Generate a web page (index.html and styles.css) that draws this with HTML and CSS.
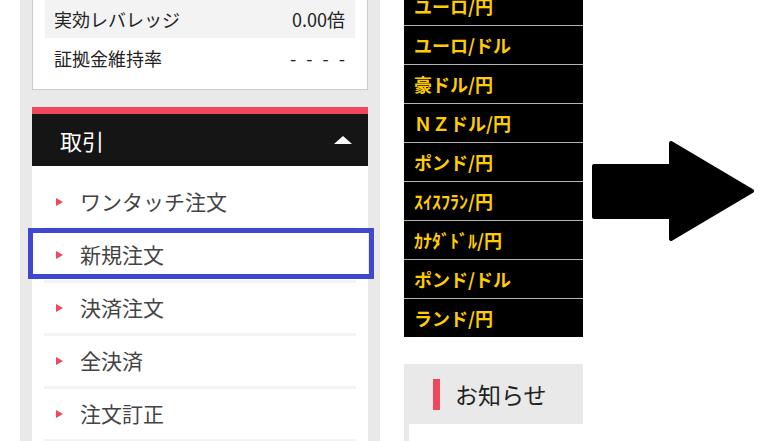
FILE: index.html
```html
<!DOCTYPE html>
<html lang="ja">
<head>
    <meta charset="UTF-8">
    <meta name="viewport" content="width=device-width, initial-scale=1.0">
    <title>取引メニュー</title>
    <link rel="stylesheet" href="styles.css">
</head>
<body>
    <div class="page">
        <div class="side">
            <div class="stats">
                <div class="stat shade"><span>実効レバレッジ</span><span>0.00倍</span></div>
                <div class="stat"><span>証拠金維持率</span><span class="dash">- - - -</span></div>
            </div>

            <div class="trade">
                <div class="trade-head">
                    <span>取引</span>
                    <span class="caret"></span>
                </div>
                <ul class="menu">
                    <li>ワンタッチ注文</li>
                    <li class="marked">新規注文<span class="mark"></span></li>
                    <li>決済注文</li>
                    <li>全決済</li>
                    <li>注文訂正</li>
                </ul>
            </div>
        </div>

        <div class="middle">
            <ul class="pairs">
                <li>ユーロ/円</li>
                <li>ユーロ/ドル</li>
                <li>豪ドル/円</li>
                <li>ＮＺドル/円</li>
                <li>ポンド/円</li>
                <li>ｽｲｽﾌﾗﾝ/円</li>
                <li>ｶﾅﾀﾞﾄﾞﾙ/円</li>
                <li>ポンド/ドル</li>
                <li>ランド/円</li>
            </ul>

            <div class="notice">
                <h2>お知らせ</h2>
                <div class="notice-body"></div>
            </div>
        </div>

        <svg class="arrow" width="162" height="100" viewBox="0 0 162 100">
            <polygon points="2,25 79,25 79,2 160,50 79,98 79,76 2,76" fill="#000" stroke="#000" stroke-width="4" stroke-linejoin="round"/>
        </svg>
    </div>
</body>
</html>
```

FILE: styles.css
```css
body {
    margin: 0;
    font-family: "Noto Sans CJK JP", "Noto Sans", sans-serif;
    color: #333;
    background-color: #fff;
    overflow: hidden;
}

.page {
    display: flex;
    align-items: flex-start;
    height: 441px;
}

.side {
    margin-left: 20px;
    width: 336px;
    padding: 0 12px;
    height: 441px;
    background-color: #e9e9e9;
}

.stats {
    margin-top: -13px;
    padding: 12px 12px 11px;
    background-color: #fff;
    border: 1px solid #ccc;
}

.stat {
    display: flex;
    justify-content: space-between;
    align-items: center;
    height: 38px;
    padding: 0 10px 0 9px;
    font-size: 18px;
    color: #222;
}

.stat + .stat {
    height: 40px;
}

.shade {
    background-color: #f3f3f3;
}

.dash {
    letter-spacing: 3px;
    margin-right: -3px;
}

.trade {
    margin-top: 17px;
    border-top: 7px solid #ef475c;
    background-color: #fff;
}

.trade-head {
    display: flex;
    justify-content: space-between;
    align-items: center;
    height: 52px;
    padding: 0 16px 0 28px;
    background-color: #151515;
    color: #fff;
    font-size: 22px;
}

.caret {
    width: 0;
    height: 0;
    border-left: 9px solid transparent;
    border-right: 9px solid transparent;
    border-bottom: 8px solid #fff;
}

.menu {
    list-style: none;
    margin: 0;
    padding: 11px 12px 0;
}

.menu li {
    position: relative;
    display: flex;
    align-items: center;
    height: 47px;
    padding: 0 0 3px 36px;
    border-bottom: 3px solid #f3f3f3;
    font-size: 21px;
    color: #444;
}

.menu li::before {
    content: "";
    position: absolute;
    left: 12px;
    top: 21px;
    border-top: 4px solid transparent;
    border-bottom: 4px solid transparent;
    border-left: 7px solid #ef475c;
}

.mark {
    position: absolute;
    left: -16px;
    right: -18px;
    top: -2px;
    bottom: 1px;
    border: 5px solid #3f48cc;
}

.middle {
    margin-left: 24px;
    width: 179px;
}

.pairs {
    list-style: none;
    margin: -13px 0 0;
    padding: 0;
    background-color: #000;
}

.pairs li {
    display: flex;
    align-items: center;
    height: 37px;
    padding: 0 0 1px 10px;
    border-bottom: 1px solid #b4b4b4;
    color: #ffcc00;
    font-size: 18px;
    font-weight: bold;
}

.pairs li:last-child {
    border-bottom: none;
}

.notice {
    margin-top: 27px;
    padding-left: 5px;
    background-color: #e9e9e9;
}

.notice h2 {
    display: flex;
    align-items: center;
    height: 60px;
    margin: 0;
    padding-left: 24px;
    font-size: 23px;
    font-weight: normal;
    color: #222;
}

.notice h2::before {
    content: "";
    width: 7px;
    height: 31px;
    margin-right: 15px;
    background-color: #ef475c;
}

.notice-body {
    height: 40px;
    background-color: #fff;
}

.arrow {
    display: block;
    margin: 141px 0 0 9px;
}
```
